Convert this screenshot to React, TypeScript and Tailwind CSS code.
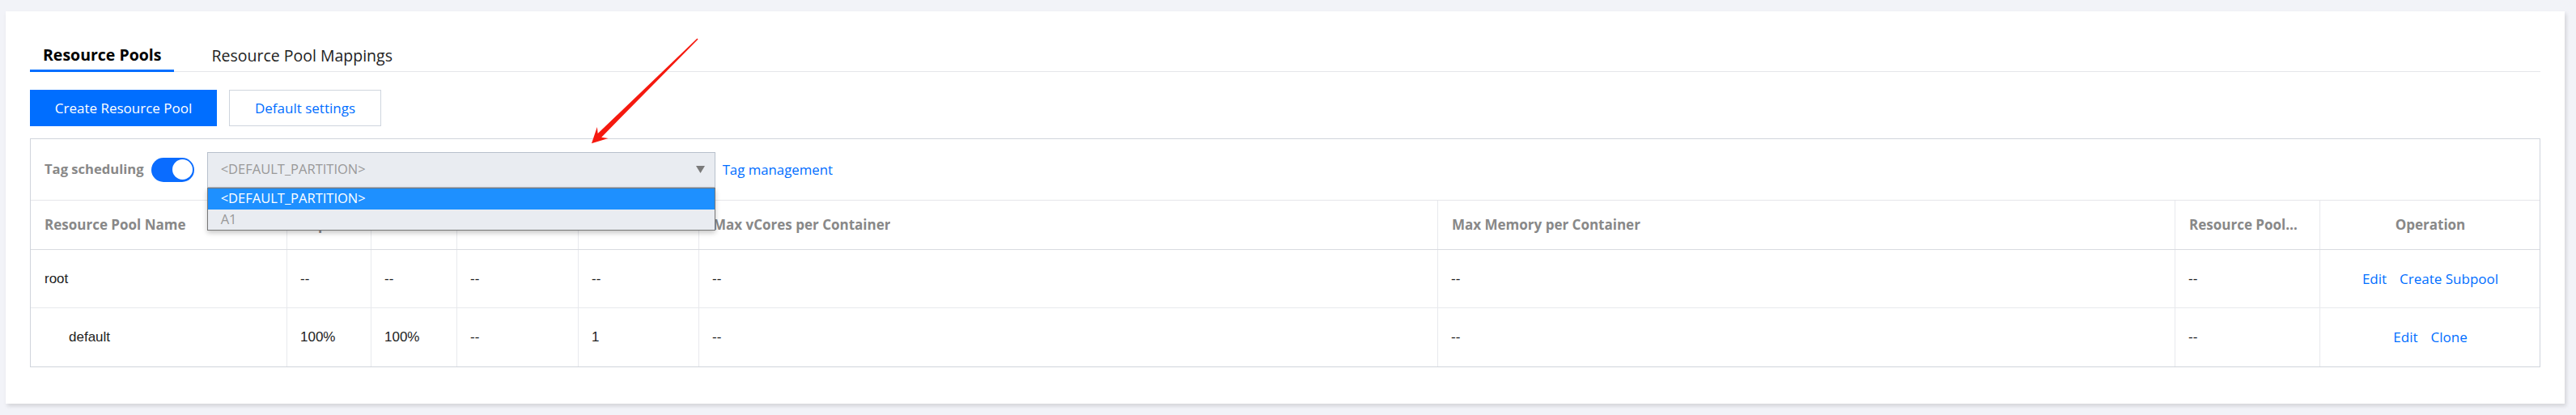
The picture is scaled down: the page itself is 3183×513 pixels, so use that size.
import React from 'react';

const GRID = 'grid grid-cols-[317px_104px_106px_150px_149px_913px_911px_179px_272px]';

interface PoolRow {
  name: string;
  depth: number;
  cells: string[];
  ops: string[];
}

const headers = [
  'Resource Pool Name',
  'Capacity',
  'Max Capacity',
  'Min User Limit',
  'User Resource Limit',
  'Max vCores per Container',
  'Max Memory per Container',
  'Resource Pool Status',
];

const rows: PoolRow[] = [
  { name: 'root', depth: 0, cells: ['--', '--', '--', '--', '--', '--', '--'], ops: ['Edit', 'Create Subpool'] },
  { name: 'default', depth: 1, cells: ['100%', '100%', '--', '1', '--', '--', '--'], ops: ['Edit', 'Clone'] },
];

const RedArrow: React.FC = () => (
  <svg className="absolute inset-0 pointer-events-none" width="3183" height="513">
    {/* annotation arrow pointing at the tag dropdown */}
    <g transform="translate(862 48) rotate(135.4)">
      <polygon
        points="0,-0.8 170,-3.2 165,-10 184,0 165,9.5 170,3.2 0,0.8"
        fill="#f5190f"
      />
    </g>
  </svg>
);

const App: React.FC = () => {
  return (
    <div className="relative min-h-[513px] bg-[#f2f3f8] pt-[14px] pl-[7px] pr-[14px] pb-[14px] font-['Open_Sans',sans-serif]">
      <div className="bg-white h-[485px] px-[30px] pt-[35px] shadow-[2px_3px_5px_rgba(0,0,0,0.13)]">
        {/* Tabs */}
        <div className="flex gap-[30px] h-[40px] border-b border-[#e5e6ea]">
          <div className="px-[16px] h-[40px] -mb-[2px] border-b-[3px] border-[#006eff] flex items-center text-[19.5px] font-bold text-black">
            Resource Pools
          </div>
          <div className="px-[16px] h-[40px] flex items-center text-[19.5px] text-[#222]">
            Resource Pool Mappings
          </div>
        </div>

        {/* Action buttons */}
        <div className="flex gap-[15px] mt-[22px]">
          <button className="w-[231px] h-[45px] bg-[#006eff] text-white text-[17px]">
            Create Resource Pool
          </button>
          <button className="w-[188px] h-[45px] border border-[#cfd5de] bg-white text-[#006eff] text-[17px]">
            Default settings
          </button>
        </div>

        {/* Table */}
        <div className="mt-[15px] border border-[#d0d4dc]">
          <div className="h-[76px] flex items-center pl-[17px] border-b border-[#e5e6ea]">
            <span className="text-[16.6px] font-bold text-[#888]">Tag scheduling</span>
            <div className="ml-[9px] w-[53px] h-[30px] rounded-full bg-[#0a6cff] flex items-center justify-end pr-[2px]">
              <div className="w-[25px] h-[25px] rounded-full bg-white" />
            </div>
            <div className="relative ml-[16px] w-[628px] h-[44px] z-10">
              <div className="h-full bg-[#e9ecf1] border border-[#b8c0cc] flex items-center justify-between pl-[16px] pr-[12px]">
                <span className="text-[16.5px] text-[#999]">&lt;DEFAULT_PARTITION&gt;</span>
                <svg width="11" height="9" viewBox="0 0 11 9">
                  <polygon points="0,0 11,0 5.5,9" fill="#7a7a7a" />
                </svg>
              </div>
              <div className="absolute top-full left-0 w-full border border-[#777] bg-[#e9ecf1] shadow-[0_3px_6px_rgba(0,0,0,0.22)]">
                <div className="h-[26px] bg-[#1e90ff] text-white text-[16.5px] pl-[16px] flex items-center">
                  &lt;DEFAULT_PARTITION&gt;
                </div>
                <div className="h-[25px] text-[#999] text-[16.5px] pl-[16px] flex items-center">A1</div>
              </div>
            </div>
            <span className="ml-[9px] text-[16.8px] text-[#006eff]">Tag management</span>
          </div>

          <div className={`${GRID} h-[61px] border-b border-[#d9dbe0]`}>
            {headers.map(h => (
              <div
                key={h}
                className="border-r border-[#e8e9ed] pl-[17px] pr-[24px] flex items-center text-[17px] font-bold text-[#888] overflow-hidden"
              >
                <span className="truncate">{h}</span>
              </div>
            ))}
            <div className="flex items-center justify-center text-[17px] font-bold text-[#888]">Operation</div>
          </div>

          {rows.map((r, i) => (
            <div
              key={r.name}
              className={`${GRID} h-[72px] ${i < rows.length - 1 ? 'border-b border-[#e8e9ed]' : ''}`}
            >
              <div className="border-r border-[#e8e9ed] flex items-center font-['Liberation_Sans',sans-serif] text-[17px] text-[#222]">
                <span className={r.depth ? 'pl-[47px]' : 'pl-[17px]'}>{r.name}</span>
              </div>
              {r.cells.map((c, j) => (
                <div
                  key={j}
                  className="border-r border-[#e8e9ed] pl-[16px] flex items-center font-['Liberation_Sans',sans-serif] text-[17px] text-[#222]"
                >
                  {c}
                </div>
              ))}
              <div className="flex items-center justify-center gap-[16px] text-[17px] text-[#006eff]">
                {r.ops.map(o => (
                  <span key={o}>{o}</span>
                ))}
              </div>
            </div>
          ))}
        </div>
      </div>
      <RedArrow />
    </div>
  );
};

export default App;
